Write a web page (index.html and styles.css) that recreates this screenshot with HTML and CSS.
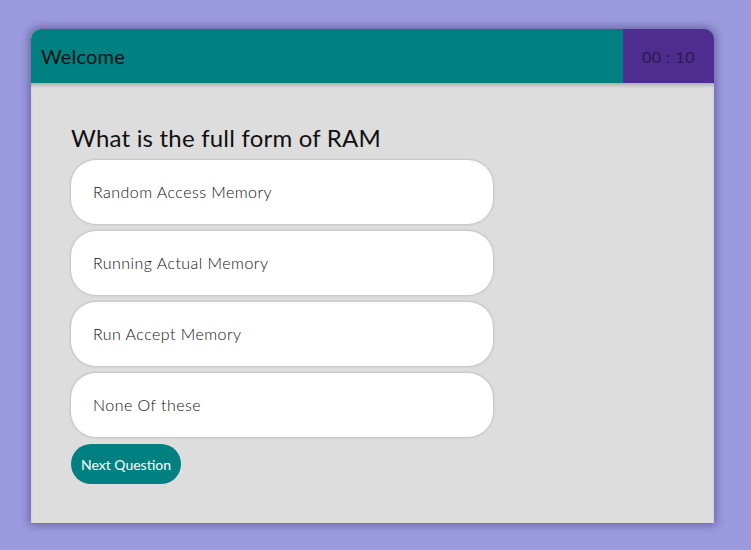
FILE: index.html
```html
<!DOCTYPE html>
<html>
<head>
<meta charset="utf-8">
<link rel="stylesheet" href="styles.css">
</head>
<body>
<div class="card">
  <div class="header">
    <div class="title">Welcome</div>
    <div class="timer">00 : 10</div>
  </div>
  <div class="content">
    <h2 class="question">What is the full form of RAM</h2>
    <div class="options">
      <div class="option">Random Access Memory</div>
      <div class="option">Running Actual Memory</div>
      <div class="option">Run Accept Memory</div>
      <div class="option">None Of these</div>
    </div>
    <button class="next">Next Question</button>
  </div>
</div>
</body>
</html>
```

FILE: styles.css
```css
html, body {
  margin: 0;
  padding: 0;
}
body {
  background: #9b9ade;
  font-family: Lato, "Open Sans", sans-serif;
  padding: 29px 37px 0 31px;
  height: 550px;
  box-sizing: border-box;
}
.card {
  background: #dddddd;
  border-radius: 10px 10px 0 0;
  box-shadow: 0 0 8px 2px rgba(40, 30, 90, 0.45);
  overflow: hidden;
}
.header {
  display: flex;
  height: 54px;
  background: #008080;
}
.title {
  flex: 1;
  display: flex;
  align-items: center;
  padding-left: 10px;
  font-size: 20px;
  color: #111;
  letter-spacing: 0.2px;
}
.timer {
  width: 91px;
  background: #4e2d8f;
  display: flex;
  align-items: center;
  justify-content: center;
  font-size: 16px;
  color: #2a1a4e;
  letter-spacing: 0.5px;
}
.content {
  padding: 40px 40px 39px 40px;
  box-shadow: inset 0 4px 4px -2px rgba(0,0,0,0.25);
}
.question {
  margin: 0;
  font-size: 24px;
  font-weight: normal;
  color: #111;
  line-height: 30px;
  height: 37px;
  letter-spacing: 0.2px;
}
.options {
  display: flex;
  flex-direction: column;
  gap: 7px;
  width: 422px;
}
.option {
  background: #fff;
  height: 64px;
  border-radius: 25px;
  box-shadow: 0 0 2px 1px rgba(0,0,0,0.12);
  display: flex;
  align-items: center;
  padding-left: 22px;
  padding-bottom: 2px;
  box-sizing: border-box;
  font-size: 16px;
  font-weight: 300;
  color: #111;
  letter-spacing: 0.45px;
}
.next {
  margin-top: 7px;
  height: 40px;
  width: 110px;
  padding: 0;
  border: none;
  border-radius: 20px;
  background: #008080;
  color: #fff;
  font-family: inherit;
  font-size: 14px;
  white-space: nowrap;
}
```
